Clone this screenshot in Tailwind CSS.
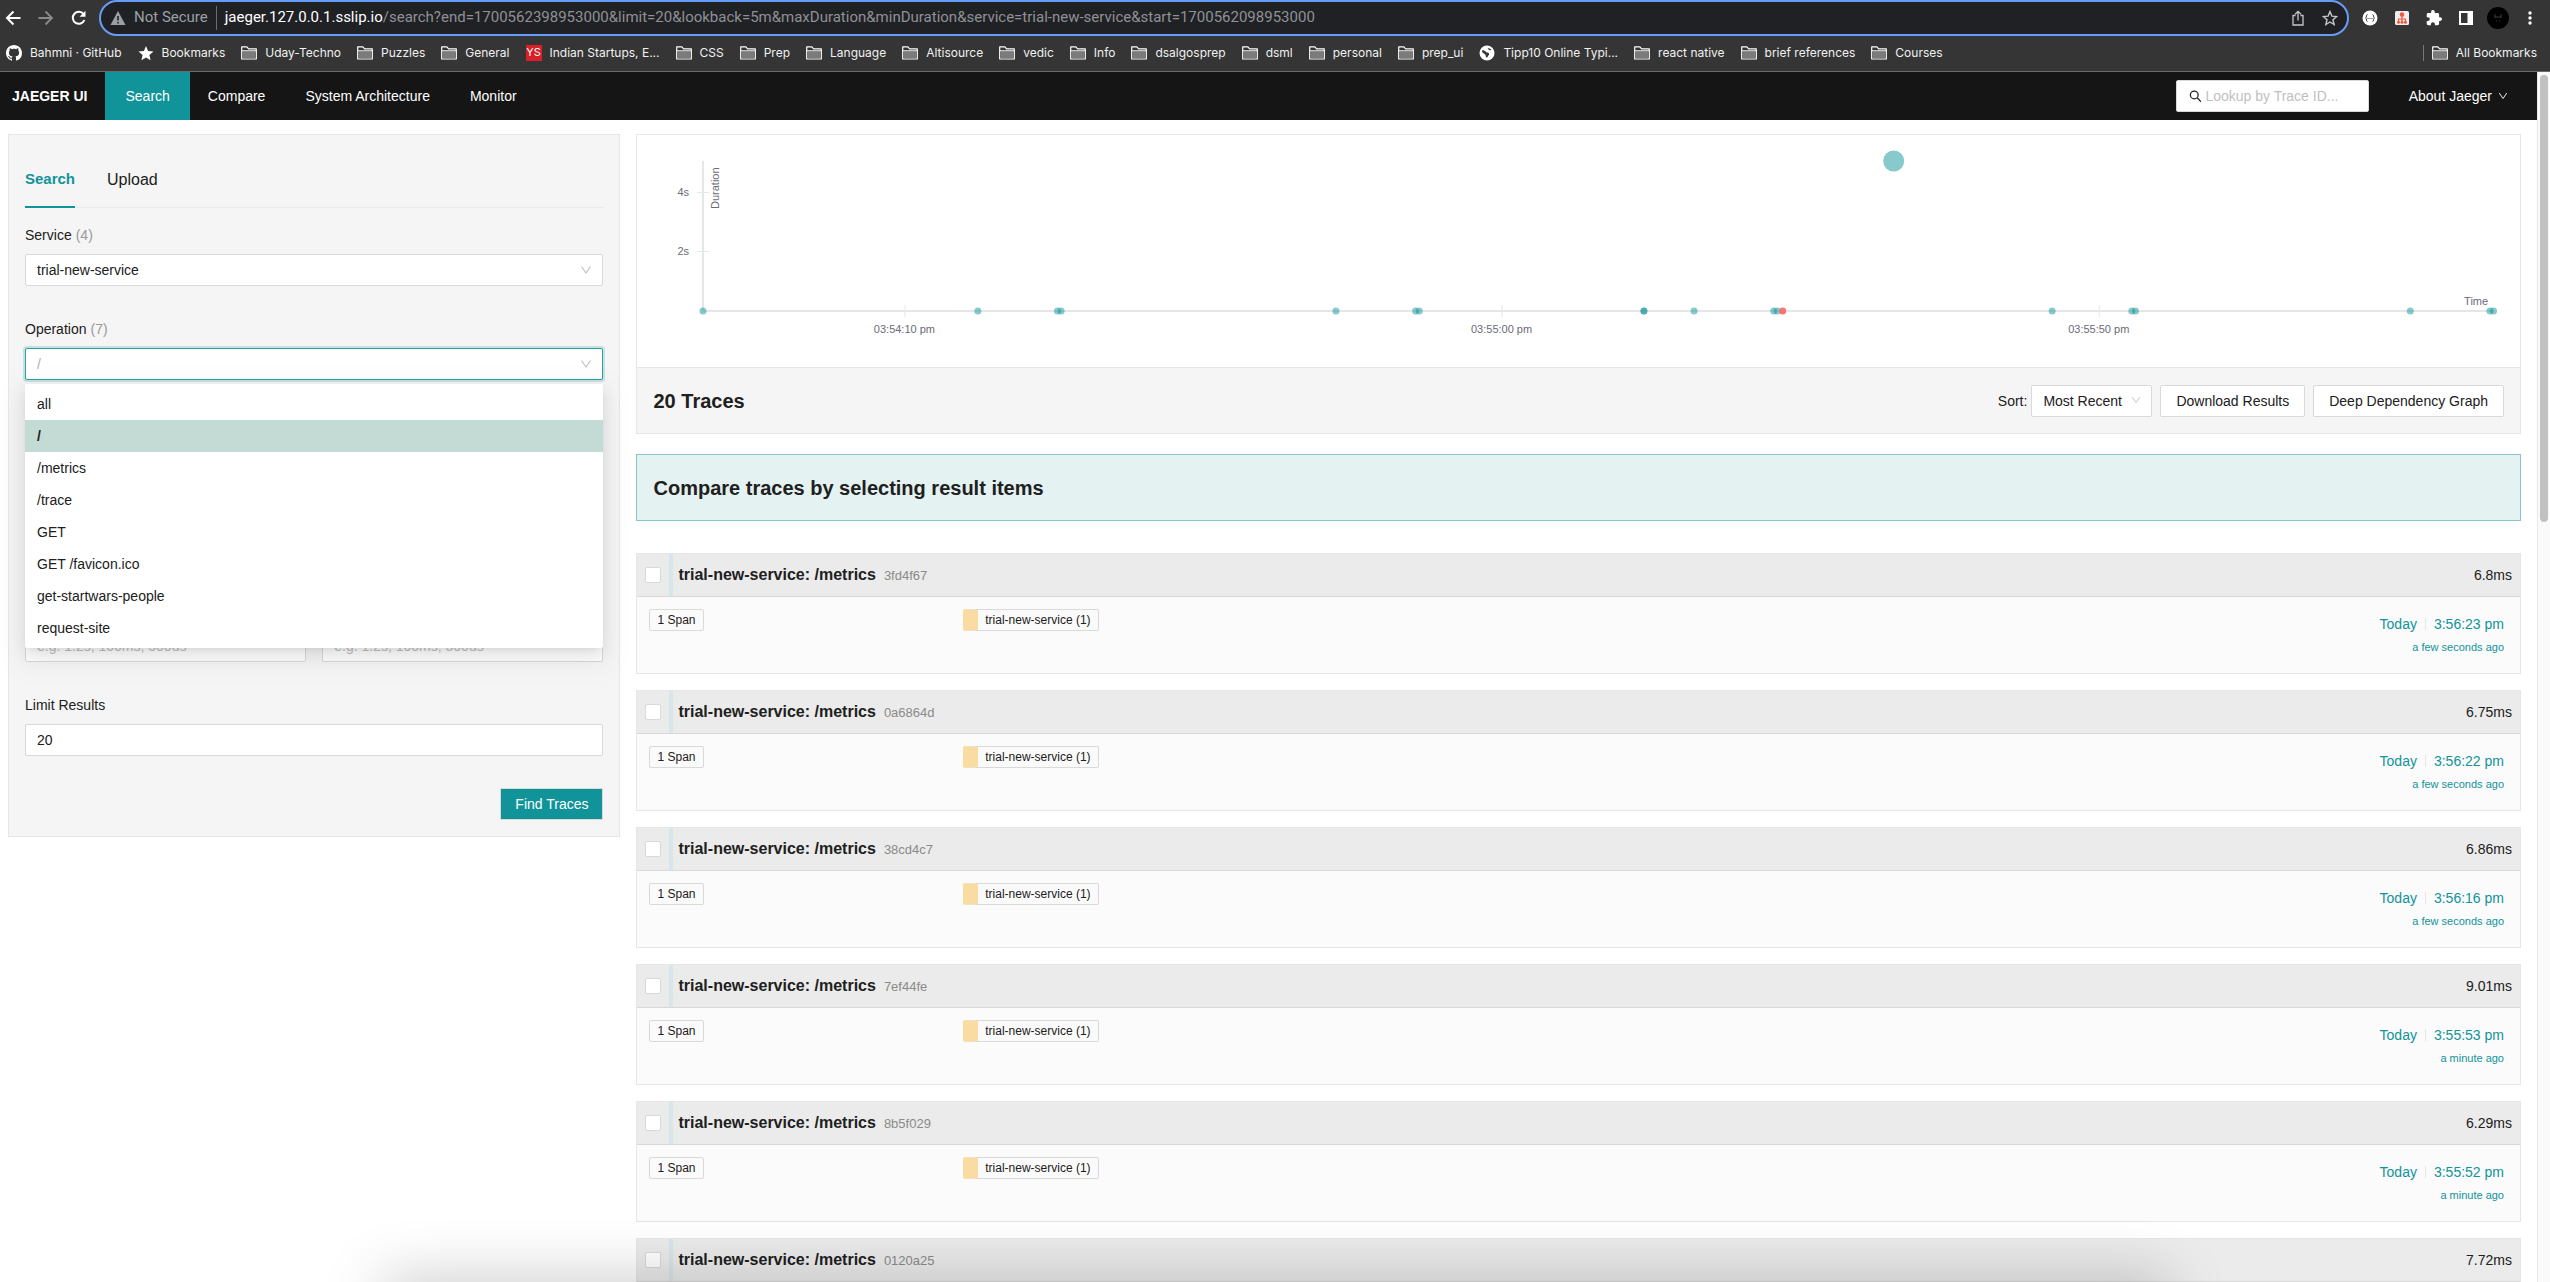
<!DOCTYPE html>
<html lang="en">
<head>
<meta charset="utf-8">
<title>Jaeger UI</title>
<script src="https://cdn.jsdelivr.net/npm/@tailwindcss/browser@4"></script>
</head>
<body class="h-screen overflow-hidden flex flex-col bg-white text-sm text-[#202020] font-['Liberation_Sans',Arial,sans-serif]">

<svg class="hidden">
  <symbol id="folder" viewBox="0 0 16 16"><path d="M.7 14V1.800h5.200l1.700 2h7.700V14z" fill="#353535" stroke="#fff" stroke-width="1.200" stroke-linejoin="round"/><path d="M1.600 6.400h12.800v6.800H1.600z" fill="#7b7b7b"/><path d="M1 5.800h14" stroke="#fff" stroke-width="1"/></symbol>
  <symbol id="chevron" viewBox="0 0 12 12"><path d="M1.500 2.500 6 9l4.500-6.500" fill="none" stroke="currentColor" stroke-width="1.100"/></symbol>
</svg>

<!-- Browser toolbar -->
<div class="shrink-0 flex items-center h-9 bg-[#353535] pr-1">
  <div class="flex w-[99px] shrink-0 items-center gap-[17px] pl-[5px]">
    <button aria-label="Back" class="size-4"><svg viewBox="0 0 16 16" class="size-4" fill="none" stroke="#fff" stroke-width="2"><path d="M15.500 8H2M8.500 1.500 2 8l6.500 6.500"/></svg></button>
    <button aria-label="Forward" class="size-4"><svg viewBox="0 0 16 16" class="size-4" fill="none" stroke="#8b8b8b" stroke-width="1.800"><path d="M.5 8H14M7.500 1.500 14 8l-6.500 6.500"/></svg></button>
    <button aria-label="Reload" class="size-4"><svg viewBox="0 0 16 16" class="size-4"><path d="M13.400 10a6 6 0 1 1-.8-5.800" fill="none" stroke="#fff" stroke-width="2"/><path d="M14.500.8v6H8.500z" fill="#fff"/></svg></button>
  </div>
  <div class="flex-1 h-9 flex items-center rounded-full border-2 border-[#669df6] bg-[#202124] pl-[9px] pr-[9px] text-[15px] font-[Roboto,sans-serif] text-[#9aa0a6]">
    <svg viewBox="0 0 16 16" class="size-4"><path d="M8 1 15.500 15H.5z" fill="#9aa0a6"/><path d="M8 6v4.500M8 12v1.600" stroke="#202124" stroke-width="1.600"/></svg>
    <span class="ml-2 whitespace-nowrap">Not Secure</span>
    <span class="mx-2 h-6 w-px bg-[#6a6c70]"></span>
    <span class="flex-1 whitespace-nowrap text-[#8e9196]"><span class="text-white">jaeger.127.0.0.1.sslip.io</span>/search?end=1700562398953000&amp;limit=20&amp;lookback=5m&amp;maxDuration&amp;minDuration&amp;service=trial-new-service&amp;start=1700562098953000</span>
    <div class="flex gap-4">
      <button aria-label="Share" class="size-4"><svg viewBox="0 0 16 16" class="size-4" fill="none" stroke="#c4c6ca" stroke-width="1.300"><path d="M5.500 5.500H3v9.500h10V5.500h-2.500M8 10.500V1.500M5 4.300 8 1.300l3 3"/></svg></button>
      <button aria-label="Bookmark this page" class="size-4"><svg viewBox="0 0 16 16" class="size-4" fill="none" stroke="#c4c6ca" stroke-width="1.400"><path d="m8 1.600 1.900 4.500 4.800.4-3.700 3.200 1.100 4.800L8 12l-4.100 2.500L5 9.700 1.300 6.500l4.800-.4z"/></svg></button>
    </div>
  </div>
  <div class="ml-[5px] flex items-center">
    <button aria-label="JSON viewer" class="w-8 flex justify-center"><svg viewBox="0 0 16 16" class="size-4"><circle cx="8" cy="8" r="7.500" fill="#fff"/><path d="M5.500 4.500c-1.600 0-.4 2.800-2 3.500 1.600.7.400 3.500 2 3.500M10.500 4.500c1.600 0 .4 2.800 2 3.500-1.600.7-.4 3.500-2 3.500" fill="none" stroke="#444" stroke-width="1"/><path d="M5.500 8.500h5" stroke="#444" stroke-width="1" stroke-dasharray="1 1"/></svg></button>
    <button aria-label="Sitemap extension" class="w-8 flex justify-center"><svg viewBox="0 0 14 14" class="size-3.5"><rect width="14" height="14" rx="1.500" fill="#eee"/><circle cx="7" cy="3.600" r="2.300" fill="#f2573f"/><path d="M7 5v6M3.500 11V8h7v3" fill="none" stroke="#f2573f" stroke-width="1.200"/><circle cx="3.500" cy="11.200" r="1.500" fill="#f2573f"/><circle cx="7" cy="11.200" r="1.500" fill="#f2573f"/><circle cx="10.500" cy="11.200" r="1.500" fill="#f2573f"/></svg></button>
    <button aria-label="Extensions" class="w-8 flex justify-center"><svg viewBox="1 1 22 22" class="size-4" fill="#fff"><path d="M20.500 11H19V7a2 2 0 0 0-2-2h-4V3.500a2.500 2.500 0 0 0-5 0V5H4a2 2 0 0 0-2 2v3.800h1.500a2.700 2.700 0 0 1 0 5.400H2V20a2 2 0 0 0 2 2h3.800v-1.500a2.700 2.700 0 0 1 5.400 0V22H17a2 2 0 0 0 2-2v-4h1.500a2.500 2.500 0 0 0 0-5z"/></svg></button>
    <button aria-label="Side panel" class="w-8 flex justify-center"><svg viewBox="0 0 14 14" class="size-3.5"><path d="M0 0h14v14H0z" fill="#fff"/><path d="M2 2h6.500v10H2z" fill="#353535"/></svg></button>
    <button aria-label="Profile" class="w-8 flex justify-center"><svg viewBox="0 0 22 22" class="size-[22px]"><circle cx="11" cy="11" r="11" fill="#000"/><path d="M8 7v4M14 7v4M8 10h6M9 14h1M12 14h1" stroke="#3a3a3a" stroke-width="1" fill="none"/></svg></button>
    <button aria-label="Menu" class="w-8 flex justify-center"><svg viewBox="0 0 4 16" class="h-4 w-1" fill="#fff"><circle cx="2" cy="3" r="1.700"/><circle cx="2" cy="8" r="1.700"/><circle cx="2" cy="13" r="1.700"/></svg></button>
  </div>
</div>

<!-- Bookmarks bar -->
<div class="shrink-0 flex items-center justify-between h-9 bg-[#353535] border-b border-[#6a6a6a] pb-0.5 pl-1.5 pr-[13px] text-xs text-[#f1f1f1] font-[Inter,sans-serif] whitespace-nowrap">
  <nav id="bookmarks" class="flex items-center gap-4"></nav>
  <a href="#" class="flex items-center gap-2"><span class="h-4 w-px bg-[#777]"></span><svg class="size-4"><use href="#folder"/></svg>All Bookmarks</a>
</div>

<div class="flex-1 min-h-0 flex">
  <div class="flex-1 min-w-0 overflow-hidden">
    <!-- App header -->
    <header class="flex items-center h-12 bg-[#151515] text-white">
      <a href="#" class="pl-3 pr-[18px] font-bold">JAEGER UI</a>
      <a href="#" class="flex h-12 items-center bg-[#11939a] px-5">Search</a>
      <a href="#" class="pl-[18px] pr-5">Compare</a>
      <a href="#" class="px-5">System Architecture</a>
      <a href="#" class="px-5">Monitor</a>
      <label class="ml-auto flex h-8 w-[193px] items-center gap-1 rounded-xs border border-[#d9d9d9] bg-white pl-3">
        <svg viewBox="0 0 14 14" class="size-3.5" fill="none" stroke="#222" stroke-width="1.400"><circle cx="5.800" cy="5.800" r="4.300"/><path d="m9 9 4.300 4.300"/></svg>
        <input aria-label="Lookup by Trace ID" placeholder="Lookup by Trace ID..." class="w-full outline-none placeholder:text-[#bfbfbf]">
      </label>
      <button class="ml-10 mr-[29px] flex items-center gap-1.5">About Jaeger <svg class="size-2.5"><use href="#chevron"/></svg></button>
    </header>

    <main class="grid grid-cols-[minmax(0,13fr)_minmax(0,40fr)] items-start gap-4 pl-2 pr-4 pt-3.5">
      <!-- Search form -->
      <form class="border border-[#e6e6e6] bg-[#f5f5f5] p-4">
        <div class="flex h-[57px] items-end gap-8 border-b border-[#eaeaea] text-base">
          <button type="button" class="-mb-px h-[57px] border-b-2 border-[#11939a] pt-0.5 text-[15px] font-bold text-[#11939a]">Search</button>
          <button type="button" class="-mb-px h-[57px] border-b-2 border-transparent pt-0.5">Upload</button>
        </div>

        <div class="mt-2 mb-6">
          <label for="service" class="flex h-[38px] items-center gap-1">Service <span class="text-[#999]">(4)</span></label>
          <div class="relative">
            <select id="service" class="block h-8 w-full appearance-none rounded-xs border border-[#d9d9d9] bg-white px-[11px]"><option>trial-new-service</option></select>
            <svg class="pointer-events-none absolute right-[11px] top-2.5 size-3 text-[#bfbfbf]"><use href="#chevron"/></svg>
          </div>
        </div>

        <div class="mb-6">
          <label for="operation" class="flex h-[38px] items-center gap-1">Operation <span class="text-[#999]">(7)</span></label>
          <div class="relative">
            <select id="operation" class="block h-8 w-full appearance-none rounded-xs border border-[#2aa1a3] bg-white px-[11px] text-[#b0b0b0] shadow-[0_0_0_2px_rgba(17,147,154,0.2)]"><option>/</option></select>
            <svg class="pointer-events-none absolute right-[11px] top-2.5 size-3 text-[#bfbfbf]"><use href="#chevron"/></svg>
            <ul role="listbox" class="absolute inset-x-0 top-9 z-10 rounded-xs bg-white py-1 shadow-[0_3px_6px_-4px_rgba(0,0,0,0.12),0_6px_16px_0_rgba(0,0,0,0.08),0_9px_28px_8px_rgba(0,0,0,0.05)]">
              <li role="option" class="h-8 px-3 leading-8">all</li>
              <li role="option" aria-selected="true" class="h-8 bg-[#c4dad4] px-3 font-bold leading-8">/</li>
              <li role="option" class="h-8 px-3 leading-8">/metrics</li>
              <li role="option" class="h-8 px-3 leading-8">/trace</li>
              <li role="option" class="h-8 px-3 leading-8">GET</li>
              <li role="option" class="h-8 px-3 leading-8">GET /favicon.ico</li>
              <li role="option" class="h-8 px-3 leading-8">get-startwars-people</li>
              <li role="option" class="h-8 px-3 leading-8">request-site</li>
            </ul>
          </div>
        </div>

        <!-- Tags and lookback rows stay behind the open operation list -->
        <div class="mb-6 h-[70px]"></div>
        <div class="mb-6 h-[70px]"></div>

        <div class="mb-6 grid grid-cols-2 gap-4 pt-[38px]">
          <input aria-label="Max Duration" placeholder="e.g. 1.2s, 100ms, 500us" class="h-8 rounded-xs border border-[#d9d9d9] bg-white px-[11px] placeholder:text-[#bfbfbf]">
          <input aria-label="Min Duration" placeholder="e.g. 1.2s, 100ms, 500us" class="h-8 rounded-xs border border-[#d9d9d9] bg-white px-[11px] placeholder:text-[#bfbfbf]">
        </div>

        <div class="mb-6">
          <label for="limit" class="flex h-[38px] items-center">Limit Results</label>
          <input id="limit" value="20" class="block h-8 w-full rounded-xs border border-[#d9d9d9] bg-white px-[11px]">
        </div>
        <div class="mt-8 flex justify-end">
          <button type="button" class="h-8 border border-[#d9d9d9] bg-[#11939a] px-3.5 text-white">Find Traces</button>
        </div>
      </form>

      <!-- Results -->
      <section>
        <div class="border border-[#e6e6e6]">
          <div class="pl-[66px] pr-[26px]">
            <svg class="block h-[232px] w-full overflow-visible text-[11px]" fill="#6b6b76">
              <g fill="#e6e6e9">
                <rect x="-1" y="26" width="2" height="150"/>
                <rect x="0" y="175" width="100%" height="2"/>
                <rect x="-6" y="57" width="12" height="1"/>
                <rect x="-6" y="116" width="12" height="1"/>
                <rect x="11.25%" y="170" width="1" height="12"/>
                <rect x="44.6%" y="170" width="1" height="12"/>
                <rect x="77.95%" y="170" width="1" height="12"/>
              </g>
              <g text-anchor="end"><text x="-14" y="61">4s</text><text x="-14" y="120">2s</text><text x="99.7%" y="170">Time</text></g>
              <text transform="rotate(-90)" x="-74" y="16">Duration</text>
              <g text-anchor="middle"><text x="11.25%" y="198">03:54:10 pm</text><text x="44.6%" y="198">03:55:00 pm</text><text x="77.95%" y="198">03:55:50 pm</text></g>
              <g fill="#11939a" fill-opacity=".5">
                <circle cx="66.5%" cy="26" r="10.500"/>
                <circle cx="0%" cy="176" r="3.500"/><circle cx="15.350%" cy="176" r="3.500"/>
                <circle cx="19.8%" cy="176" r="3.500"/><circle cx="20%" cy="176" r="3.500"/>
                <circle cx="35.35%" cy="176" r="3.500"/><circle cx="39.8%" cy="176" r="3.500"/><circle cx="40%" cy="176" r="3.500"/>
                <circle cx="52.55%" cy="176" r="3.500"/><circle cx="52.55%" cy="176" r="3.500"/><circle cx="55.35%" cy="176" r="3.500"/>
                <circle cx="59.8%" cy="176" r="3.500"/><circle cx="60%" cy="176" r="3.500"/>
                <circle cx="75.35%" cy="176" r="3.500"/><circle cx="79.8%" cy="176" r="3.500"/><circle cx="80%" cy="176" r="3.500"/>
                <circle cx="95.35%" cy="176" r="3.500"/><circle cx="99.8%" cy="176" r="3.500"/><circle cx="100%" cy="176" r="3.500"/>
              </g>
              <circle cx="60.3%" cy="176" r="3.500" fill="#ff6366" fill-opacity=".9"/>
            </svg>
          </div>
          <div class="flex h-[66px] items-center gap-2 border-t border-[#e6e6e6] bg-[#f5f5f5] px-4">
            <h2 class="mr-auto text-xl font-bold">20 Traces</h2>
            <label for="sort" class="-mr-1">Sort:</label>
            <div class="relative">
              <select id="sort" class="block h-8 w-[121px] appearance-none rounded-xs border border-[#d9d9d9] bg-white px-[11px]"><option>Most Recent</option></select>
              <svg class="pointer-events-none absolute right-[11px] top-2.5 size-2.5 text-[#bfbfbf]"><use href="#chevron"/></svg>
            </div>
            <button class="h-8 rounded-xs border border-[#d9d9d9] bg-white px-[15px]">Download Results</button>
            <button class="h-8 rounded-xs border border-[#d9d9d9] bg-white px-[15px]">Deep Dependency Graph</button>
          </div>
        </div>
        <div class="mt-5 flex h-[67px] items-center border border-[#8ac6c8] bg-[#e4f2f2] px-4">
          <h2 class="text-xl font-bold">Compare traces by selecting result items</h2>
        </div>
        <ul id="traces" class="mt-8 flex flex-col gap-4"></ul>
      </section>
    </main>
  </div>
  <!-- Scrollbar -->
  <div class="w-[13px] shrink-0 border-l border-[#e8e8e8] bg-[#fafafa] px-0.5 pt-[3px]"><div class="h-[37%] rounded-full bg-[#c1c1c1]"></div></div>
</div>

<!-- Shade cast by the dock along the bottom edge -->
<div class="pointer-events-none fixed inset-x-[15%] -bottom-10 h-10 shadow-[0_0_60px_0_rgba(0,0,0,0.26)]"></div>

<script>
  const folder = '<svg class="size-4"><use href="#folder"/></svg>';
  const icons = {
    github: '<svg viewBox="0 0 16 16" class="size-4" fill="#fff"><path d="M8 0C3.580 0 0 3.580 0 8c0 3.540 2.290 6.530 5.470 7.590.4.070.55-.17.55-.38 0-.19-.01-.82-.01-1.490-2.010.37-2.530-.49-2.690-.94-.09-.23-.48-.94-.82-1.130-.28-.15-.68-.52-.01-.53.63-.01 1.080.58 1.230.82.72 1.210 1.870.87 2.330.66.07-.52.28-.87.51-1.070-1.780-.2-3.640-.89-3.640-3.950 0-.87.31-1.590.82-2.150-.08-.2-.36-1.020.08-2.120 0 0 .67-.21 2.200.82.64-.18 1.320-.27 2-.27s1.360.09 2 .27c1.530-1.040 2.200-.82 2.200-.82.44 1.100.16 1.920.08 2.120.51.56.82 1.270.82 2.150 0 3.070-1.870 3.750-3.650 3.950.29.25.54.73.54 1.480 0 1.070-.01 1.930-.01 2.200 0 .21.15.46.55.38A8.010 8.010 0 0 0 16 8c0-4.420-3.580-8-8-8z"/></svg>',
    star: '<svg viewBox="0 0 16 16" class="size-4" fill="#fff"><path d="m8 1 2.100 4.900 5.400.5-4.100 3.500 1.200 5.300L8 12.400l-4.600 2.800 1.200-5.300L.5 6.400l5.400-.5z"/></svg>',
    ys: '<span class="flex size-4 items-center justify-center bg-[#d9202a] text-[11px] text-white">YS</span>',
    globe: '<svg viewBox="0 0 16 16" class="size-4"><circle cx="8" cy="8" r="7.500" fill="#fff"/><path d="M3 5.500c2-.5 3 .5 4 1.500s2.500 0 3 1.500-1 2-1.500 3.500c-.7 1.500-2-.5-2-2S3 9 3 5.500zM8.500 2.500c1 1.500 3 .5 4 2.500-1.500.5-3 .5-4-2.500z" fill="#353535"/></svg>'
  };
  const bookmarks = [['Bahmni · GitHub', 'github'], ['Bookmarks', 'star'], ['Uday-Techno'], ['Puzzles'], ['General'], ['Indian Startups, E...', 'ys'], ['CSS'], ['Prep'], ['Language'], ['Altisource'], ['vedic'], ['Info'], ['dsalgosprep'], ['dsml'], ['personal'], ['prep_ui'], ['Tipp10 Online Typi...', 'globe'], ['react native'], ['brief references'], ['Courses']];
  document.getElementById('bookmarks').innerHTML = bookmarks.map(([name, icon]) =>
    `<a href="#" class="flex items-center gap-2">${icon ? icons[icon] : folder}${name}</a>`).join('');

  const details = (time, ago) => `
    <div class="pl-3 pt-3"><span class="inline-flex h-[22px] items-center rounded-xs border border-[#d9d9d9] bg-[#fafafa] px-[7px] text-xs">1 Span</span></div>
    <div class="col-span-3 pl-3 pt-3"><span class="inline-flex h-[22px] items-center overflow-hidden rounded-xs border border-l-[15px] border-[#d9d9d9] border-l-[#f8dca1] bg-[#fafafa] px-[7px] text-xs">trial-new-service (1)</span></div>
    <div class="col-span-2 pr-4 pt-4 text-right text-[#11939a]">
      <div class="flex h-[22px] items-center justify-end gap-2">Today<span class="h-3 w-px bg-[#e6e6e6]"></span>${time}</div>
      <div class="text-[11px] leading-6">${ago}</div>
    </div>`;
  // A trace without a start time shows its title bar only
  const traces = [
    ['3fd4f67', '6.8ms', '3:56:23 pm', 'a few seconds ago'],
    ['0a6864d', '6.75ms', '3:56:22 pm', 'a few seconds ago'],
    ['38cd4c7', '6.86ms', '3:56:16 pm', 'a few seconds ago'],
    ['7ef44fe', '9.01ms', '3:55:53 pm', 'a minute ago'],
    ['8b5f029', '6.29ms', '3:55:52 pm', 'a minute ago'],
    ['0120a25', '7.72ms']
  ];
  document.getElementById('traces').innerHTML = traces.map(([id, duration, time, ago]) => `
    <li class="border border-[#e6e6e6] bg-[#fbfbfb]">
      <div class="flex h-[43px] items-center border-b border-[#d8d8d8] bg-[#ebebeb] pr-2">
        <div class="flex w-8 shrink-0 items-center pl-2"><input type="checkbox" aria-label="Compare trace ${id}" class="size-4 appearance-none rounded-xs border border-[#d9d9d9] bg-white"></div>
        <span class="h-full w-1 bg-[#d7e6ea]"></span>
        <h3 class="flex flex-1 items-baseline gap-2 pl-[5px] text-base font-bold">trial-new-service: /metrics<span class="text-[13px] font-normal text-[#8a8a8a]">${id}</span></h3>
        <span>${duration}</span>
      </div>
      <div class="grid h-[76px] grid-cols-6 items-start">${time ? details(time, ago) : ''}</div>
    </li>`).join('');
</script>
</body>
</html>
